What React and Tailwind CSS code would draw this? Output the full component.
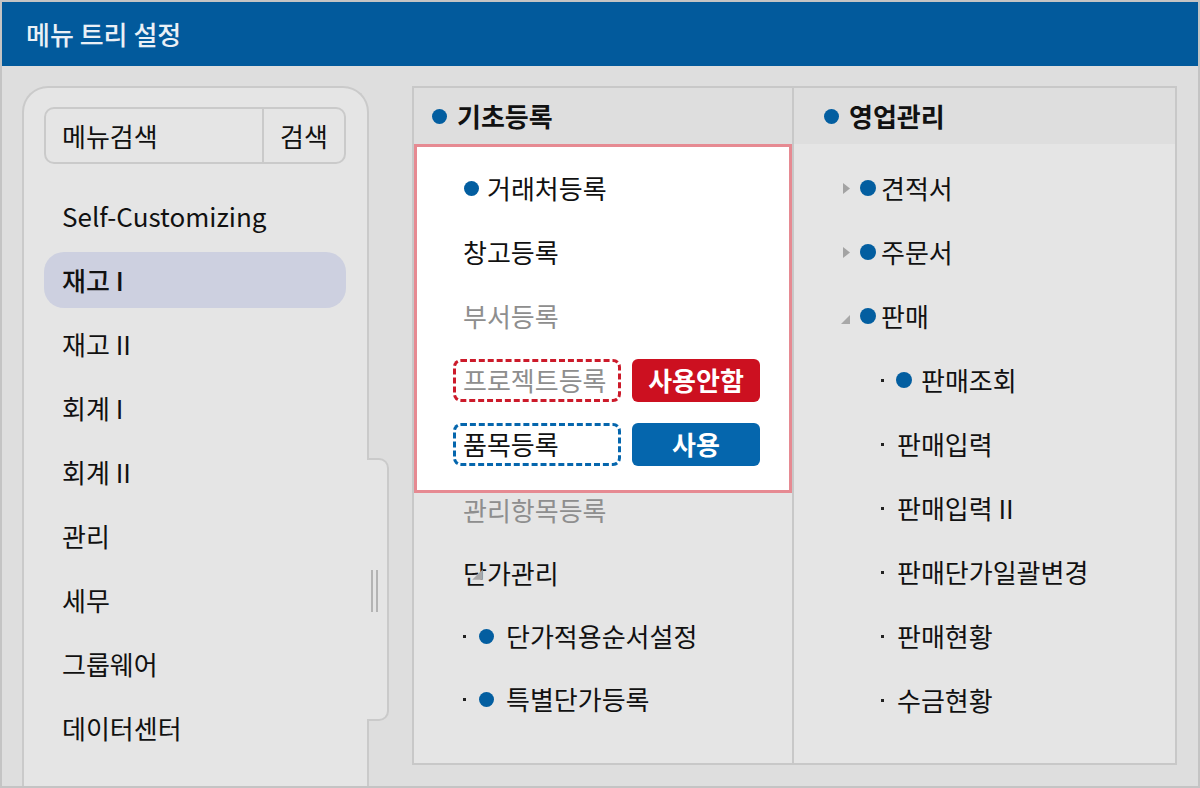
import React from "react";

const FONT = { fontFamily: '"Noto Sans CJK KR", "Noto Sans", sans-serif' };

const LEFT_MENU = [
  "Self-Customizing",
  "재고 I",
  "재고 II",
  "회계 I",
  "회계 II",
  "관리",
  "세무",
  "그룹웨어",
  "데이터센터",
];

const Dot = ({ className = "" }) => (
  <span className={`inline-block w-[15px] h-[15px] rounded-full bg-[#035ea0] shrink-0 ${className}`} />
);

const Tick = ({ className = "" }) => (
  <span className={`inline-block w-[3px] h-[3px] bg-[#222] shrink-0 ${className}`} />
);

const Caret = () => (
  <svg width="9" height="13" viewBox="0 0 9 13" className="shrink-0">
    <polygon points="1,1 8,6.5 1,12" fill="#a3a3a3" />
  </svg>
);

const Corner = ({ className = "", size = 11 }) => (
  <svg width={size} height={size} viewBox="0 0 11 11" className={`shrink-0 ${className}`}>
    <polygon points="10,1 10,10 1,10" fill="#a8a8a8" />
  </svg>
);

const App = () => {
  return (
    <div
      style={FONT}
      className="w-[1200px] h-[788px] border-2 border-[#c4c4c4] bg-[#dedede] flex flex-col overflow-hidden text-[#111] text-[26px] leading-none"
    >
      {/* Title bar */}
      <div className="h-[64px] shrink-0 bg-[#025a9c] flex items-center pl-6">
        <span className="text-[#eaf0f6] font-medium">메뉴 트리 설정</span>
      </div>

      <div className="flex-1 flex pl-5 pt-5 min-h-0">
        {/* Left menu panel */}
        <div className="flex items-start h-full">
          <div className="w-[347px] h-full border-2 border-b-0 border-[#cacaca] rounded-t-[26px] bg-[#e5e5e5] pl-5 pr-[21px] pt-[19px]">
            <div className="h-[57px] border-2 border-[#cacaca] rounded-[10px] flex">
              <div className="flex-1 flex items-center pl-4">메뉴검색</div>
              <div className="w-[82px] border-l-2 border-[#cacaca] flex items-center justify-center">
                검색
              </div>
            </div>
            <div className="mt-6 flex flex-col gap-2">
              {LEFT_MENU.map((m) => (
                <div
                  key={m}
                  className={`h-[56px] rounded-[20px] flex items-center pl-[18px] ${
                    m === "재고 I" ? "bg-[#cdd0e0] font-medium" : ""
                  }`}
                >
                  {m}
                </div>
              ))}
            </div>
          </div>
          {/* scroll track bump */}
          <div className="-ml-[2px] mt-[372px] w-[22px] h-[263px] border-2 border-l-0 border-[#cacaca] rounded-r-[10px] bg-[#e5e5e5] flex items-center pl-[4px]">
            <div className="flex gap-[3px] mt-[2px]">
              <span className="w-[2px] h-[42px] bg-[#b4b4b4]" />
              <span className="w-[2px] h-[42px] bg-[#b4b4b4]" />
            </div>
          </div>
        </div>

        {/* Tree panel */}
        <div className="ml-[23px] w-[765px] h-[679px] border-2 border-[#c8c8c8] bg-[#e5e5e5] flex">
          {/* 기초등록 */}
          <div className="w-[380px] border-r-2 border-[#c8c8c8] flex flex-col">
            <div className="h-[56px] bg-[#dedede] flex items-center pl-[18px] gap-[10px] font-bold">
              <Dot />
              기초등록
            </div>
            <div className="border-[3px] border-[#e68a92] bg-white pl-[46px] pt-[24px] pb-[29px] flex flex-col gap-[30px]">
              <div className="h-[34px] flex items-center gap-[8px] pl-px">
                <Dot />
                거래처등록
              </div>
              <div className="h-[34px] flex items-center">창고등록</div>
              <div className="h-[34px] flex items-center text-[#8e8e8e]">부서등록</div>
              <div className="h-[34px] flex items-center">
                <div className="-ml-[10px] w-[168px] h-[43px] border-[3px] border-dashed border-[#cc1a2a] rounded-[8px] flex items-center pl-[7px] text-[#8e8e8e]">
                  프로젝트등록
                </div>
                <div className="ml-[11px] w-[128px] h-[43px] rounded-[6px] bg-[#cc1020] text-white font-bold flex items-center justify-center">
                  사용안함
                </div>
              </div>
              <div className="h-[34px] flex items-center">
                <div className="-ml-[10px] w-[168px] h-[43px] border-[3px] border-dashed border-[#0566ad] rounded-[8px] flex items-center pl-[7px]">
                  품목등록
                </div>
                <div className="ml-[11px] w-[128px] h-[43px] rounded-[6px] bg-[#0566ad] text-white font-bold flex items-center justify-center">
                  사용
                </div>
              </div>
            </div>
            <div className="pl-[49px] flex flex-col gap-[29px]">
              <div className="h-[34px] flex items-center text-[#8e8e8e]">관리항목등록</div>
              <div className="h-[34px] flex items-center">
                <span className="relative">
                  단가관리
                  <Corner size={13} className="absolute left-[8px] top-[8px]" />
                </span>
              </div>
              <div className="h-[34px] flex items-center">
                <Tick />
                <Dot className="ml-[13px]" />
                <span className="ml-[12px]">단가적용순서설정</span>
              </div>
              <div className="h-[34px] flex items-center">
                <Tick />
                <Dot className="ml-[13px]" />
                <span className="ml-[12px]">특별단가등록</span>
              </div>
            </div>
          </div>

          {/* 영업관리 */}
          <div className="flex-1 flex flex-col">
            <div className="h-[56px] bg-[#dedede] flex items-center pl-[30px] gap-[10px] font-bold">
              <Dot />
              영업관리
            </div>
            <div className="pt-[27px] flex flex-col gap-[30px]">
              <div className="h-[34px] flex items-center pl-[48px]">
                <Caret />
                <Dot className="ml-[9px] w-[16px] h-[16px]" />
                <span className="ml-[5px]">견적서</span>
              </div>
              <div className="h-[34px] flex items-center pl-[48px]">
                <Caret />
                <Dot className="ml-[9px] w-[16px] h-[16px]" />
                <span className="ml-[5px]">주문서</span>
              </div>
              <div className="h-[34px] flex items-center pl-[46px]">
                <Corner className="mt-[6px]" />
                <Dot className="ml-[9px] w-[16px] h-[16px]" />
                <span className="ml-[5px]">판매</span>
              </div>
              <div className="h-[34px] flex items-center pl-[87px]">
                <Tick />
                <Dot className="ml-[12px] w-[16px] h-[16px]" />
                <span className="ml-[9px]">판매조회</span>
              </div>
              {["판매입력", "판매입력 II", "판매단가일괄변경", "판매현황", "수금현황"].map((t) => (
                <div key={t} className="h-[34px] flex items-center pl-[87px]">
                  <Tick />
                  <span className="ml-[13px]">{t}</span>
                </div>
              ))}
            </div>
          </div>
        </div>
      </div>
    </div>
  );
};

export default App;
